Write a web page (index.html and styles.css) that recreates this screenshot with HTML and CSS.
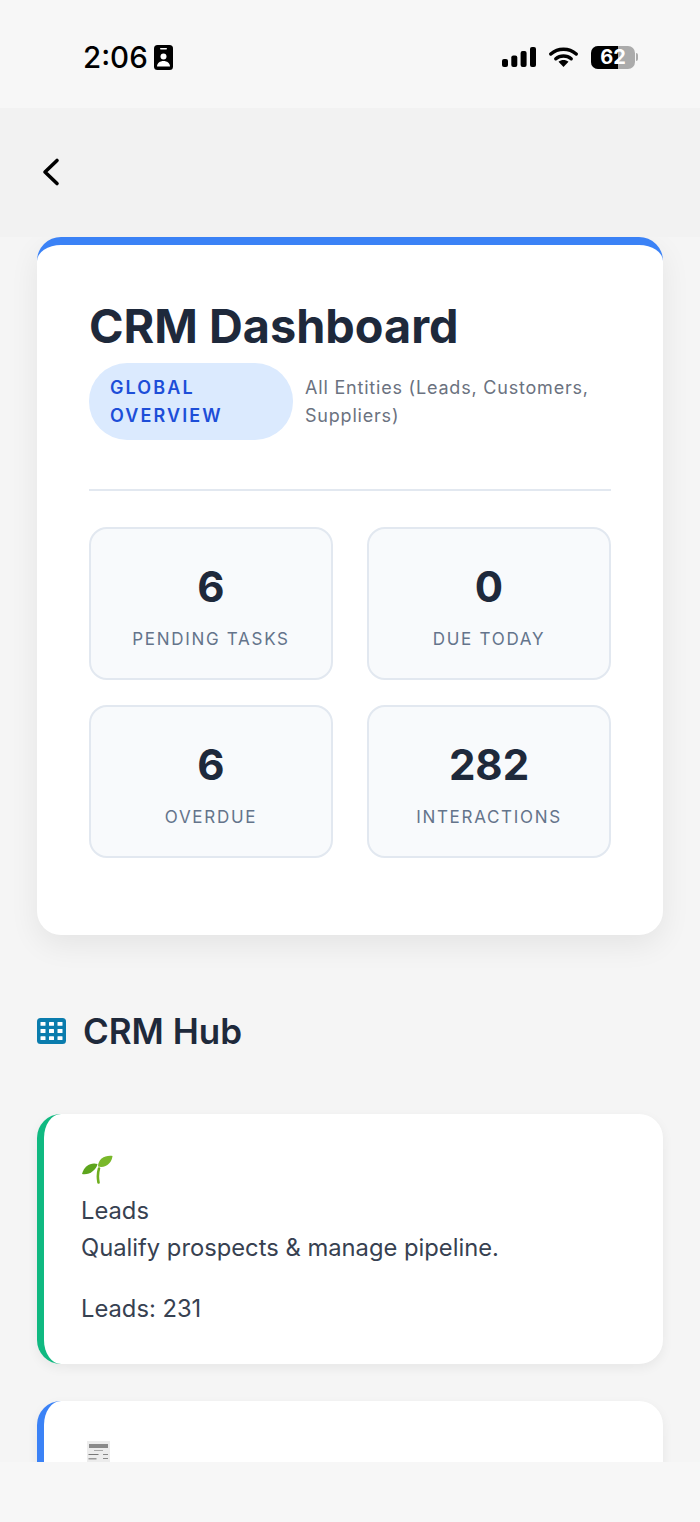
FILE: index.html
```html
<!DOCTYPE html>
<html lang="en">

<head>
  <meta charset="UTF-8">
  <meta name="viewport" content="width=device-width, initial-scale=1.0">
  <title>CRM Dashboard</title>
  <link rel="stylesheet" href="styles.css">
</head>

<body>
  <div class="status-bar">
    <div class="status-left">
      <span class="clock">2:06</span>
      <svg class="id-icon" width="19" height="25" viewBox="0 0 19 25">
        <rect width="19" height="25" rx="3.5" fill="#000"/>
        <rect x="6" y="3" width="7" height="1.6" rx="0.8" fill="#fff"/>
        <circle cx="9.5" cy="11.500" r="3" fill="#fff"/>
        <path d="M3 21.500c0-3.400 3-5.500 6.500-5.500s6.500 2.100 6.500 5.500z" fill="#fff"/>
      </svg>
    </div>
    <div class="status-right">
      <svg width="34" height="20" viewBox="0 0 34 20">
        <rect x="0" y="12" width="6" height="8" rx="2" fill="#000"/>
        <rect x="9.300" y="8.500" width="6" height="11.500" rx="2" fill="#000"/>
        <rect x="18.600" y="4" width="6" height="16" rx="2" fill="#000"/>
        <rect x="28" y="0" width="6" height="20" rx="2" fill="#000"/>
      </svg>
      <svg width="29" height="20" viewBox="0 0 29 20">
        <path d="M1.800 7C9 .6 20 .6 27.200 7" fill="none" stroke="#000" stroke-width="3.400" stroke-linecap="round"/>
        <path d="M6.800 11.800c4.400-3.800 11-3.800 15.400 0" fill="none" stroke="#000" stroke-width="3.400" stroke-linecap="round"/>
        <path d="M14.500 20l-5-5.200c3-2.400 7-2.400 10 0z" fill="#000"/>
      </svg>
      <div class="battery">
        <div class="battery-body">
          <div class="battery-level"></div>
          <span class="battery-text">62</span>
        </div>
        <div class="battery-cap"></div>
      </div>
    </div>
  </div>

  <div class="nav-bar">
    <svg width="18" height="30" viewBox="0 0 18 30">
      <path d="M15 3.500L3 15l12 11.500" fill="none" stroke="#000" stroke-width="3.600" stroke-linecap="round" stroke-linejoin="round"/>
    </svg>
  </div>

  <div class="content">
    <div class="overview-card">
      <h1>CRM Dashboard</h1>
      <div class="scope-row">
        <span class="scope-badge">GLOBAL OVERVIEW</span>
        <span class="scope-text">All Entities (Leads, Customers, Suppliers)</span>
      </div>
      <div class="stats-grid">
        <div class="stat-box">
          <div class="stat-value">6</div>
          <div class="stat-label">PENDING TASKS</div>
        </div>
        <div class="stat-box">
          <div class="stat-value">0</div>
          <div class="stat-label">DUE TODAY</div>
        </div>
        <div class="stat-box">
          <div class="stat-value">6</div>
          <div class="stat-label">OVERDUE</div>
        </div>
        <div class="stat-box">
          <div class="stat-value">282</div>
          <div class="stat-label">INTERACTIONS</div>
        </div>
      </div>
    </div>

    <h2 class="hub-title">
      <svg width="29" height="26" viewBox="0 0 29 26">
        <rect width="29" height="26" rx="3.500" fill="#0a7cad"/>
        <g fill="#fff">
          <rect x="3.500" y="4" width="5" height="3.800" rx="0.500"/>
          <rect x="12" y="4" width="5" height="3.800" rx="0.500"/>
          <rect x="20.500" y="4" width="5" height="3.800" rx="0.500"/>
          <rect x="3.500" y="11.100" width="5" height="3.800" rx="0.500"/>
          <rect x="12" y="11.100" width="5" height="3.800" rx="0.500"/>
          <rect x="20.500" y="11.100" width="5" height="3.800" rx="0.500"/>
          <rect x="3.500" y="18.200" width="5" height="3.800" rx="0.500"/>
          <rect x="12" y="18.200" width="5" height="3.800" rx="0.500"/>
          <rect x="20.500" y="18.200" width="5" height="3.800" rx="0.500"/>
        </g>
      </svg>
      CRM Hub
    </h2>

    <div class="hub-card hub-green">
      <svg class="hub-emoji" width="32" height="30" viewBox="0 0 32 30">
        <path d="M17.500 28.500c-1-5-1-9 .5-14" fill="none" stroke="#6fae1f" stroke-width="2.600" stroke-linecap="round"/>
        <path d="M1 20C3 12 10 8 16.500 10C15.500 16 8 21.500 1 20z" fill="#5da51d"/>
        <path d="M17 12.500C17 5 24 1 31.500 2C31 8.500 25 14.500 17 12.500z" fill="#79b82a"/>
      </svg>
      <div class="hub-name">Leads</div>
      <div class="hub-desc">Qualify prospects &amp; manage pipeline.</div>
      <div class="hub-count">Leads: 231</div>
    </div>

    <div class="hub-card hub-blue">
      <svg class="hub-emoji" width="32" height="30" viewBox="0 0 32 30">
        <rect x="6" y="0" width="23" height="30" fill="#ececec"/>
        <rect x="8" y="3" width="19" height="4" fill="#8a8a8a"/>
        <rect x="13" y="9" width="9" height="1" fill="#aaa"/>
        <rect x="7.500" y="13" width="10" height="1" fill="#777"/>
        <rect x="22" y="13" width="5" height="1" fill="#888"/>
        <rect x="7.500" y="17" width="8" height="1.500" fill="#999"/>
        <rect x="22" y="17" width="5" height="1" fill="#888"/>
        <rect x="7.500" y="21" width="8" height="1" fill="#777"/>
      </svg>
    </div>
  </div>

  <div class="bottom-bar"></div>
</body>

</html>
```
FILE: styles.css
```css
* {
  box-sizing: border-box;
}

body {
  font-family: Inter, 'Noto Sans', sans-serif;
  margin: 0;
  padding: 0;
  display: flex;
  flex-direction: column;
  height: 100vh;
  overflow: hidden;
  background-color: #F5F5F5;
  color: #1E293B;
}

.status-bar {
  height: 108px;
  flex-shrink: 0;
  background-color: #F7F7F7;
  display: flex;
  align-items: center;
  justify-content: space-between;
  padding: 6px 62px 0 83px;
  color: #000000;
}

.status-left {
  display: flex;
  align-items: center;
  gap: 6px;
}

.clock {
  font-size: 29.500px;
  font-weight: 500;
  line-height: 38px;
}

.status-right {
  display: flex;
  align-items: center;
  gap: 13px;
}

.battery {
  display: flex;
  align-items: center;
  gap: 1px;
}

.battery-body {
  position: relative;
  width: 44px;
  height: 23px;
  border-radius: 7px;
  background-color: #ABABAB;
  overflow: hidden;
  display: flex;
  align-items: center;
  justify-content: center;
}

.battery-level {
  position: absolute;
  left: 0;
  top: 0;
  bottom: 0;
  width: 27px;
  background-color: #000000;
}

.battery-text {
  position: relative;
  color: #FFFFFF;
  font-size: 20px;
  font-weight: 700;
}

.battery-cap {
  width: 2px;
  height: 8px;
  border-radius: 0 3px 3px 0;
  background-color: #ABABAB;
}

.nav-bar {
  height: 129px;
  flex-shrink: 0;
  background-color: #F2F2F2;
  padding: 49px 0 0 42px;
}

.nav-bar svg {
  display: block;
}

.content {
  flex: 1;
  min-height: 0;
  overflow: hidden;
  padding: 0 37px;
}

.overview-card {
  background-color: #FFFFFF;
  border-top: 8px solid #3B82F6;
  border-radius: 24px;
  padding: 54px 52px 77px;
  box-shadow: 0 10px 30px rgba(0, 0, 0, 0.07);
}

.overview-card h1 {
  margin: 0;
  font-size: 46.800px;
  line-height: 54px;
  font-weight: 700;
}

.scope-row {
  display: flex;
  align-items: center;
  gap: 12px;
  margin-top: 10px;
  padding-bottom: 49px;
  border-bottom: 2px solid #E2E8F0;
}

.scope-badge {
  flex-shrink: 0;
  width: 204px;
  padding: 11px 21px 10px;
  border-radius: 38px;
  background-color: #DBEAFE;
  color: #1D4ED8;
  font-size: 18px;
  line-height: 28px;
  font-weight: 600;
  letter-spacing: 2.100px;
}

.scope-text {
  padding-top: 1px;
  font-size: 18px;
  line-height: 28px;
  letter-spacing: 0.800px;
  color: #6B7280;
}

.stats-grid {
  display: grid;
  grid-template-columns: 1fr 1fr;
  column-gap: 34px;
  row-gap: 25px;
  margin-top: 36px;
}

.stat-box {
  height: 153px;
  border: 2px solid #E2E8F0;
  border-radius: 18px;
  background-color: #F8FAFC;
  text-align: center;
  padding-top: 31px;
}

.stat-value {
  font-size: 42px;
  line-height: 54px;
  font-weight: 700;
}

.stat-label {
  margin-top: 13px;
  font-size: 17px;
  line-height: 24px;
  letter-spacing: 1.700px;
  color: #64748B;
}

.hub-title {
  display: flex;
  align-items: center;
  gap: 17px;
  margin: 74px 0 61px;
  font-size: 35px;
  line-height: 44px;
  font-weight: 600;
}

.hub-card {
  background-color: #FFFFFF;
  border-left: 7px solid #10B981;
  border-radius: 24px;
  height: 250px;
  padding: 40px 37px 0;
  margin-bottom: 37px;
  box-shadow: 0 4px 12px rgba(0, 0, 0, 0.06);
  font-size: 23.750px;
  line-height: 37px;
  color: #374151;
}

.hub-blue {
  border-left-color: #3B82F6;
}

.hub-emoji {
  display: block;
  margin: 0 0 8px;
}

.hub-count {
  margin-top: 24px;
}

.bottom-bar {
  height: 60px;
  flex-shrink: 0;
  background-color: #F7F7F7;
}
```
